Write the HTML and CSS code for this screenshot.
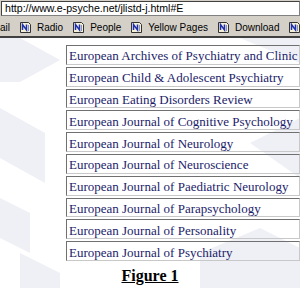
FILE: index.html
```html
<!DOCTYPE html>
<html>
  <head>
    <title>Journals E</title>
    <link rel="stylesheet" href="styles.css">
  </head>
  <body>
    <div class="address">
      <div class="address-box">http://www.e-psyche.net/jlistd-j.html#E</div>
    </div>

    <div class="links">
      <span class="link">ail</span>
      <span class="link"><svg class="page-icon" viewBox="0 0 11 11"><path d="M0.5 0.5h8l2 2v8h-10z" fill="#f4f0d8" stroke="#333"/><path d="M2.5 8V2.5l4 5.5V2.5" stroke="#1c2fb0" stroke-width="1.5" fill="none"/><path d="M8.5 3v6" stroke="#8890c0"/></svg>Radio</span>
      <span class="link"><svg class="page-icon" viewBox="0 0 11 11"><path d="M0.5 0.5h8l2 2v8h-10z" fill="#f4f0d8" stroke="#333"/><path d="M2.5 8V2.5l4 5.5V2.5" stroke="#1c2fb0" stroke-width="1.5" fill="none"/><path d="M8.5 3v6" stroke="#8890c0"/></svg>People</span>
      <span class="link"><svg class="page-icon" viewBox="0 0 11 11"><path d="M0.5 0.5h8l2 2v8h-10z" fill="#f4f0d8" stroke="#333"/><path d="M2.5 8V2.5l4 5.5V2.5" stroke="#1c2fb0" stroke-width="1.5" fill="none"/><path d="M8.5 3v6" stroke="#8890c0"/></svg>Yellow Pages</span>
      <span class="link"><svg class="page-icon" viewBox="0 0 11 11"><path d="M0.5 0.5h8l2 2v8h-10z" fill="#f4f0d8" stroke="#333"/><path d="M2.5 8V2.5l4 5.5V2.5" stroke="#1c2fb0" stroke-width="1.5" fill="none"/><path d="M8.5 3v6" stroke="#8890c0"/></svg>Download</span>
      <span class="link"><svg class="page-icon" viewBox="0 0 11 11"><path d="M0.5 0.5h8l2 2v8h-10z" fill="#f4f0d8" stroke="#333"/><path d="M2.5 8V2.5l4 5.5V2.5" stroke="#1c2fb0" stroke-width="1.5" fill="none"/><path d="M8.5 3v6" stroke="#8890c0"/></svg></span>
    </div>

    <div class="page">
      <table class="journals">
        <tr><td>European Archives of Psychiatry and Clinic</td></tr>
        <tr><td>European Child &amp; Adolescent Psychiatry</td></tr>
        <tr><td>European Eating Disorders Review</td></tr>
        <tr><td>European Journal of Cognitive Psychology</td></tr>
        <tr><td>European Journal of Neurology</td></tr>
        <tr><td>European Journal of Neuroscience</td></tr>
        <tr><td>European Journal of Paediatric Neurology</td></tr>
        <tr><td>European Journal of Parapsychology</td></tr>
        <tr><td>European Journal of Personality</td></tr>
        <tr><td>European Journal of Psychiatry</td></tr>
      </table>
      <p class="caption">Figure 1</p>
    </div>
  </body>
</html>
```

FILE: styles.css
```css
body {
  margin: 0;
  width: 300px;
  height: 288px;
  overflow: hidden;
  background: #fff;
  font-family: "Liberation Serif", serif;
}

.address {
  background: #d4d0c8;
  padding: 1px 0 3px 1px;
}

.address-box {
  background: #fff;
  border: 1px solid #808080;
  border-top-color: #404040;
  border-left-color: #404040;
  height: 13px;
  padding-left: 3px;
  font-family: "Liberation Sans", sans-serif;
  font-size: 10.6px;
  line-height: 13px;
  color: #000;
  white-space: nowrap;
}

.links {
  background: #d4d0c8;
  height: 17px;
  border-bottom: 2px solid #404040;
  display: flex;
  align-items: center;
  gap: 10px;
  font-family: "Liberation Sans", sans-serif;
  font-size: 10px;
  color: #000;
  white-space: nowrap;
}

.link {
  display: flex;
  align-items: center;
  gap: 6px;
}

.page-icon {
  width: 11px;
  height: 11px;
}

.page {
  height: 251px;
  background-color: #fff;
  background-image: url("data:image/svg+xml,%3Csvg xmlns='http://www.w3.org/2000/svg' width='300' height='251'%3E%3Cg fill='%23eef0f6'%3E%3Cpath d='M0 0h20l40 22-40 22H0z'/%3E%3Cpath d='M0 70l45 25v50L0 120z'/%3E%3Cpath d='M0 160l30 15v40L0 200z'/%3E%3Cpath d='M20 215l40 20v16H20z'/%3E%3Cpath d='M240 0h60v25z'/%3E%3Cpath d='M250 105l50-25v60z'/%3E%3Cpath d='M200 215l60-25 40 20v41H200z'/%3E%3C/g%3E%3C/svg%3E");
  padding-top: 5px;
}

.journals {
  border-collapse: separate;
  border-spacing: 0 2px;
  margin-left: 66px;
  width: 232px;
}

.journals td {
  height: 15.8px;
  padding: 2px 1px 0 2px;
  border: 1px solid #c8c8c8;
  border-top-color: #707070;
  border-left-color: #707070;
  color: #1c1c6a;
  font-size: 13px;
  line-height: 15px;
  white-space: nowrap;
  overflow: hidden;
}

.caption {
  margin: 4px 0 0;
  text-align: center;
  font-weight: bold;
  font-size: 16px;
  text-decoration: underline;
}
```
